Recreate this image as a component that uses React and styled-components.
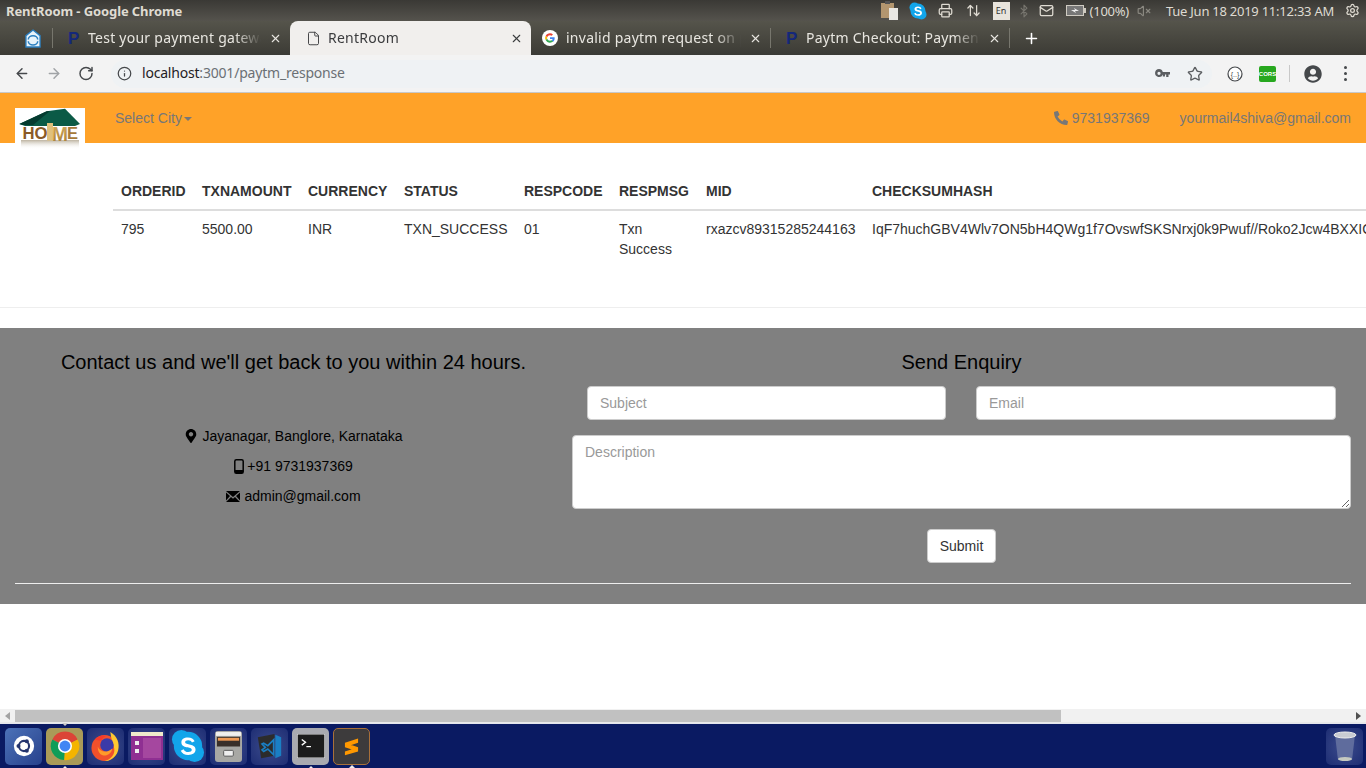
import React from "react";
import styled, { createGlobalStyle } from "styled-components";
import { ArrowLeft, ArrowRight, RotateCw, Info, Star, X, Plus, Printer, ArrowUpDown, Bluetooth, Mail, VolumeX, Settings, File } from "lucide-react";
import { FaMapMarkerAlt, FaPhoneAlt, FaUserCircle } from "react-icons/fa";

const Global = createGlobalStyle`
  html, body { margin: 0; padding: 0; height: 100%; overflow: hidden; background: #fff; }
  * { box-sizing: border-box; }
  body { font-family: "Liberation Sans", Arial, sans-serif; font-size: 14px; color: #333; }
`;

const Screen = styled.div`
  width: 1366px; height: 768px; display: flex; flex-direction: column; overflow: hidden;
`;
const TitleBar = styled.div`
  height: 21px; flex: none; display: flex; align-items: center; justify-content: space-between;
  padding: 0 6px; background: linear-gradient(#3a3935, #55534d);
  color: #dfdbd2; font: bold 13px "Noto Sans", sans-serif;
`;
const WindowTitle = styled.span`letter-spacing: -0.1px;`;
const Tray = styled.div`
  display: flex; align-items: center; height: 21px; color: #dfdbd2;
  font: 13px "Noto Sans", sans-serif; letter-spacing: -0.25px;
`;
const TrayItem = styled.span`
  display: flex; align-items: center; justify-content: center;
  margin-left: ${(p) => p.$gap ?? 0}px; white-space: nowrap;
  color: ${(p) => p.$color || "inherit"};
`;
const KeyBadge = styled.span`
  width: 17px; height: 18px; background: #e8e4dc; color: #333; font-size: 9px; letter-spacing: 0;
  display: flex; align-items: center; justify-content: center;
`;
const TabStrip = styled.div`
  height: 34px; flex: none; display: flex; align-items: stretch;
  background: linear-gradient(#55544b, #3c3b35); padding-left: 18px; color: #e8e6e0;
`;
const PinnedTab = styled.div`
  width: 34px; display: flex; align-items: center; padding-left: 7px; flex: none;
`;
const Sep = styled.span`
  width: 1px; height: 20px; background: #77766d; align-self: center; flex: none;
`;
const Tab = styled.div`
  width: ${(p) => p.$w}px; flex: none; display: flex; align-items: center; padding: 0 8px 0 ${(p) => p.$pl ?? 15}px;
  gap: ${(p) => p.$gap ?? 8}px; font: 14px "Noto Sans", sans-serif; letter-spacing: 0.25px;
  border-radius: 8px 8px 0 0;
  background: ${(p) => (p.$active ? "#f1efed" : "transparent")};
  color: ${(p) => (p.$active ? "#3b3c3e" : "#e8e6e0")};
`;
const TabLabel = styled.span`
  flex: 1; overflow: hidden; white-space: nowrap; min-width: 0; padding-bottom: 2px;
  -webkit-mask-image: linear-gradient(90deg, #000 85%, transparent 100%);
  mask-image: linear-gradient(90deg, #000 85%, transparent 100%);
`;
const PaytmGlyph = styled.span`
  width: 12px; flex: none; color: #14277a; font: bold 17px "Liberation Sans", sans-serif; line-height: 1;
`;
const NewTab = styled.div`
  margin-left: 13px; display: flex; align-items: center; color: #fff;
`;
const Toolbar = styled.div`
  height: 38px; flex: none; display: flex; align-items: center; background: #f3f3f3;
  border-bottom: 1px solid #c8c8c8; padding: 0 0 0 14px; color: #45484b;
`;
const NavButton = styled.span`
  width: 16px; display: flex; justify-content: center; margin-right: ${(p) => p.$mr ?? 16}px;
  color: ${(p) => p.$color || "#45484b"};
`;
const Omnibox = styled.div`
  width: 1101px; height: 28px; margin-left: 17px; background: #eff2f4; border-radius: 14px;
  display: flex; align-items: center; padding: 0 9px 0 6px; margin-right: 3px;
`;
const Url = styled.div`
  flex: 1; margin-left: 10px; padding-bottom: 2px; font: 14px "Noto Sans", sans-serif; color: #6b7075; white-space: nowrap; letter-spacing: -0.2px;
`;
const UrlHost = styled.span`color: #1f2124;`;
const OmniIcons = styled.div`display: flex; align-items: center; gap: 17px; color: #5b5e61;`;
const ExtRow = styled.div`display: flex; align-items: center; color: #45484b;`;
const ToolDivider = styled.span`width: 1px; height: 17px; background: #c8c8c8; margin: 0 14px 0 13px;`;
const Cors = styled.span`
  width: 17px; height: 16px; background: #27a81f; border-radius: 2px; color: #fff;
  font: bold 6px "Liberation Sans", sans-serif; display: flex; align-items: center; justify-content: center;
  margin-left: 16px;
`;
const Kebab = styled.span`
  display: flex; flex-direction: column; gap: 3px; margin-left: 22px;
`;
const Dot = styled.i`width: 3px; height: 3px; background: #45484b; border-radius: 50%; display: block;`;

const Viewport = styled.div`flex: 1; min-height: 0; overflow: hidden; background: #fff;`;
const Navbar = styled.nav`
  height: 50px; background: #ffa228; display: flex; align-items: flex-start; position: relative;
  padding-left: 15px; color: #777;
`;
const Logo = styled.div`
  width: 70px; height: 45px; margin-top: 15px; flex: none;
`;
const NavLink = styled.a`
  display: flex; align-items: center; gap: ${(p) => p.$gap ?? 0}px; line-height: 20px; margin-top: 15px; color: #777;
  margin-left: ${(p) => p.$ml ?? 0}px;
`;
const Caret = styled.span`
  display: inline-block; margin-left: 2px; margin-top: 1px; border-top: 4px solid #777;
  border-left: 4px solid transparent; border-right: 4px solid transparent;
`;
const NavRight = styled.div`margin-left: auto; display: flex; padding-right: 15px;`;
const TableWrap = styled.div`padding: 30px 0 0 113px; height: 165px; overflow: hidden; border-bottom: 1px solid #eee;`;
const DataTable = styled.table`
  border-collapse: collapse; table-layout: fixed; width: 1253px; line-height: 20px; color: #333;
`;
const Th = styled.th`
  text-align: left; padding: 8px; border-bottom: 2px solid #ddd; font-weight: 700; white-space: nowrap;
`;
const Td = styled.td`
  padding: 8px; vertical-align: top;
  white-space: ${(p) => (p.$nowrap ? "nowrap" : "normal")};
`;
const Footer = styled.footer`
  margin-top: 20px; background: #808080; height: 276px; padding: 0 15px; color: #000;
`;
const FooterGrid = styled.div`display: grid; grid-template-columns: 557px 779px; height: 255px;`;
const FooterCol = styled.div`display: flex; flex-direction: column; align-items: center; padding-top: 22px;`;
const Heading = styled.h4`margin: 0; font-size: 20px; font-weight: 400; line-height: 24px; color: #000;`;
const ContactList = styled.div`
  margin-top: 52px; display: flex; flex-direction: column; gap: 10px; align-items: center; line-height: 20px;
`;
const ContactItem = styled.div`display: flex; align-items: center; gap: ${(p) => p.$gap ?? 5}px;`;
const FieldRow = styled.div`
  display: grid; grid-template-columns: 359px 360px; column-gap: 30px; width: 100%; padding: 0 15px; margin-top: 12px;
`;
const Input = styled.input`
  height: 34px; width: 100%; border: 1px solid #ccc; border-radius: 4px; padding: 6px 12px; background: #fff;
  font: 14px "Liberation Sans", sans-serif; color: #555;
  &::placeholder { color: #999; opacity: 1; }
`;
const TextArea = styled.textarea`
  display: block; width: 100%; height: 74px; margin-top: 15px; border: 1px solid #ccc; border-radius: 4px;
  padding: 6px 12px; background: #fff; font: 14px/20px "Liberation Sans", sans-serif; color: #555;
  &::placeholder { color: #999; opacity: 1; }
`;
const SubmitButton = styled.button`
  margin-top: 20px; height: 34px; width: 69px; padding: 0; background: #fff; border: 1px solid #ccc; border-radius: 4px;
  font: 14px "Liberation Sans", sans-serif; color: #333;
`;
const FooterRule = styled.hr`margin: 0; border: 0; border-top: 1px solid #eee;`;

const ScrollBar = styled.div`
  height: 14px; flex: none; background: #f1f1f1; display: flex; align-items: center; border-bottom: 1px solid #e9e9e9;
`;
const ScrollArrow = styled.span`
  width: 15px; flex: none; display: flex; justify-content: center;
  &::before {
    content: ""; border-top: 4px solid transparent; border-bottom: 4px solid transparent;
    ${(p) => (p.$right ? "border-left: 5px solid #505050;" : "border-right: 5px solid #a3a3a3;")}
  }
`;
const ScrollThumb = styled.div`width: 1046px; height: 12px; background: #c1c1c1;`;
const ScrollGap = styled.div`flex: 1;`;
const Launcher = styled.div`
  height: 45px; flex: none; background: #0a1a62; display: flex; align-items: center; padding: 0 0 0 5px; gap: 4px;
  border-top: 1px solid #e4e6ee;
`;
const DockTile = styled.div`
  position: relative; width: 37px; height: 37px; flex: none; border-radius: 5px;
  display: flex; align-items: center; justify-content: center;
  background: ${(p) => p.$bg || "radial-gradient(circle, rgba(130,145,200,.42), rgba(80,95,160,.28))"};
  ${(p) => p.$outline && `border: 1px solid ${p.$outline};`}
`;
const Pip = styled.span`
  position: absolute; left: 50%; margin-left: -3px; border-left: 3px solid transparent; border-right: 3px solid transparent;
  ${(p) => (p.$top ? "top: -5px; border-top: 3px solid #ccc;" : "bottom: -4px; border-bottom: 3px solid #eee;")}
`;
const Trash = styled(DockTile)`margin-left: auto; margin-right: 3px;`;

const GoogleG = () => (
  <svg width="16" height="16" viewBox="0 0 48 48" style={{ flex: "none" }}>
    <circle cx="24" cy="24" r="24" fill="#fff" />
    <path fill="#EA4335" d="M24 10c3.500 0 6.500 1.200 8.900 3.400l-4 4C27.500 16 25.800 15.500 24 15.500c-3.900 0-7.200 2.600-8.400 6.100l-4.700-3.600C13.300 13.200 18.300 10 24 10z" />
    <path fill="#4285F4" d="M38 24.500c0-1-.1-2-.3-3H24v5.300h7.900c-.4 1.900-1.400 3.400-3 4.500l4.600 3.600C36.300 32.300 38 28.700 38 24.500z" />
    <path fill="#FBBC05" d="M15.600 26.500c-.6-1.700-.6-3.200 0-4.900l-4.700-3.600c-2 3.900-2 8.200 0 12.100z" />
    <path fill="#34A853" d="M24 38c3.800 0 7-1.200 9.500-3.500l-4.600-3.600c-1.300.9-3 1.400-4.900 1.400-3.900 0-7.200-2.600-8.400-6l-4.700 3.700C13.300 34.800 18.300 38 24 38z" />
  </svg>
);
const HomeGlyph = () => (
  <svg width="16" height="19" viewBox="0 0 17 20">
    <path d="M8.500 1 16 7v12H1V7z" fill="#e8f3fb" stroke="#2b7fc0" strokeWidth="1.400" />
    <path d="M3.500 11a5 4 0 0 1 10 0M13.500 13a5 4 0 0 1-10 0" fill="none" stroke="#2b7fc0" strokeWidth="1.600" />
  </svg>
);
const KeyGlyph = () => (
  <svg width="15" height="9" viewBox="0 0 15 9">
    <path fillRule="evenodd" d="M4 0a4 4 0 0 1 3.800 3H15v2.500h-1.500V8h-2.300V5.500H10V7.500H7.800V5.500A4 4 0 1 1 4 0zm0 2.700a1.600 1.600 0 1 0 0 3.200 1.600 1.600 0 0 0 0-3.200z" fill="#5b5e61" />
  </svg>
);
const Clipboard = () => (
  <svg width="18" height="20" viewBox="0 0 18 20"><rect x="0" y="2" width="13" height="15" fill="#b3966f" /><rect x="4" y="0" width="5" height="3" fill="#555" /><rect x="8" y="7" width="9" height="12" fill="#e9e7e2" /></svg>
);
const SkypeIcon = ({ size = 18 }) => (
  <svg width={size} height={size} viewBox="0 0 36 36">
    <circle cx="11" cy="11" r="10" fill="#12a5ea" /><circle cx="25" cy="25" r="10" fill="#12a5ea" /><circle cx="18" cy="18" r="15" fill="#12a5ea" />
    <path d="M25 13c-1-2.500-3.500-4-7-4-4.500 0-7 2-7 5.200 0 6.800 11 3.800 11 7.800 0 1.500-1.500 2.400-3.800 2.400-2.500 0-3.900-1-4.900-3l-3 1.600c1.400 3 4.200 4.500 8 4.500 4.700 0 7.700-2.200 7.700-5.700 0-7-11-4.300-11-7.800 0-1.200 1.300-2 3.200-2 2 0 3.200.8 4 2.400z" fill="#fff" />
  </svg>
);
const Battery = () => (
  <svg width="20" height="11" viewBox="0 0 20 11"><rect x=".5" y=".5" width="17" height="10" fill="#777" stroke="#cfcbc2" /><rect x="18" y="3" width="2" height="5" fill="#cfcbc2" /><path d="M5 5h4l-1-2 5 3H9l1 2z" fill="#eee" /></svg>
);
const DevIcon = () => (
  <svg width="16" height="16" viewBox="0 0 16 16" style={{ marginLeft: 12 }}><circle cx="8" cy="8" r="7" fill="#fff" stroke="#45484b" strokeWidth="1.200" /><text x="8" y="10.500" fontSize="7" fontFamily="Liberation Sans" textAnchor="middle" fill="#45484b">{"{..}"}</text></svg>
);
const EnvelopeGlyph = () => (
  <svg width="14" height="11" viewBox="0 0 14 11"><path d="M0 0h14L7 6z M0 1.500 4 5 0 9.500z M14 1.500 10 5l4 4.500z M0 11l5-5 2 1.800L9 6l5 5z" fill="#000" /></svg>
);
const MobileGlyph = () => (
  <svg width="10" height="15" viewBox="0 0 10 15"><rect x=".8" y=".8" width="8.400" height="13.400" rx="1.500" fill="none" stroke="#000" strokeWidth="1.500" /><rect x="1" y="11" width="8" height="3" fill="#000" /></svg>
);
const HomeLogo = () => (
  <svg width="70" height="52" viewBox="0 0 70 52" style={{ display: "block", position: "relative" }}>
    <defs>
      <linearGradient id="shade" x1="0" x2="0" y1="0" y2="1"><stop offset="0" stopColor="#bdb3a0" /><stop offset="1" stopColor="#fff" stopOpacity="0" /></linearGradient>
      <linearGradient id="gold" x1="0" x2="0" y1="0" y2="1"><stop offset="0" stopColor="#d8b165" /><stop offset="1" stopColor="#a87c34" /></linearGradient>
    </defs>
    <rect width="70" height="52" fill="#fff" />
    <rect x="6" y="32" width="58" height="9" fill="url(#shade)" />
    <path d="M4.300 16 31.700 3.300 50 .7 65 16 60 18H10z" fill="#0b5a46" />
    <path d="M4.300 16 31.700 3.300 35 3 18 17H8z" fill="#053b2f" />
    <text x="7.500" y="31" fontFamily="Liberation Sans" fontWeight="700" fontSize="17" textLength="25" lengthAdjust="spacingAndGlyphs" fill="#8a5a26">HO</text>
    <path d="M32 15h6v17.500h-6z" fill="#e0c07c" />
    <text x="37" y="32.500" fontFamily="Liberation Sans" fontWeight="700" fontSize="21" textLength="16" lengthAdjust="spacingAndGlyphs" fill="url(#gold)">M</text>
    <text x="52" y="31" fontFamily="Liberation Sans" fontWeight="700" fontSize="17" textLength="11" lengthAdjust="spacingAndGlyphs" fill="#a5793a">E</text>
  </svg>
);
const UbuntuIcon = () => (
  <svg width="22" height="22" viewBox="0 0 26 26"><circle cx="13" cy="13" r="12" fill="#fff" /><circle cx="13" cy="13" r="6" fill="none" stroke="#25356f" strokeWidth="2.500" /><circle cx="6.500" cy="13" r="2.400" fill="#25356f" /><circle cx="16.300" cy="7.300" r="2.400" fill="#25356f" /><circle cx="16.300" cy="18.700" r="2.400" fill="#25356f" /></svg>
);
const ChromeIcon = () => (
  <svg width="30" height="30" viewBox="0 0 32 32">
    <path d="M16 16 2.500 9A15 15 0 0 1 29.500 9z" fill="#db4437" /><path d="M16 16 29.500 9A15 15 0 0 1 15 31z" fill="#f4b400" /><path d="M16 16 15 31A15 15 0 0 1 2.500 9z" fill="#0f9d58" />
    <circle cx="16" cy="16" r="7.500" fill="#fff" /><circle cx="16" cy="16" r="5.800" fill="#4285f4" />
  </svg>
);
const FirefoxIcon = () => (
  <svg width="31" height="31" viewBox="0 0 32 32">
    <circle cx="15" cy="17.500" r="13.500" fill="#f0502c" />
    <path d="M21 1c7 4 10 12 8 19-2 7-8 11-14 11 7-2 11-7 10-13-.5-4-3-8-4-17z" fill="#ffc830" />
    <circle cx="17.500" cy="14.500" r="7" fill="#3b3aa8" />
    <path d="M8 16c2 6 10 7 15 2-1 6-6 8-10 7-3-1-5-4-5-9z" fill="#ff9a2a" />
    <path d="M5 9c3-4 8-5 12-4-3 1-4 3-6 5z" fill="#f6382a" />
  </svg>
);
const PurpleApp = () => (
  <svg width="32" height="28" viewBox="0 0 32 28"><rect width="32" height="28" fill="#8f2f92" /><rect width="32" height="4" fill="#efeacb" /><rect x="4" y="9" width="4" height="4" fill="#eee" /><rect x="4" y="17" width="4" height="4" fill="#eee" /><rect x="12" y="6" width="18" height="20" fill="#a5479f" /></svg>
);
const Cabinet = () => (
  <svg width="27" height="33" viewBox="0 0 28 32"><rect width="28" height="32" rx="3" fill="#a8a8a4" /><rect x="1" y="1" width="26" height="4" fill="#f0f0ee" /><rect x="2" y="6" width="24" height="10" fill="#39302a" /><rect x="3" y="7" width="22" height="3" fill="#ee9a55" /><rect x="9" y="20" width="10" height="6" rx="1" fill="#eee" stroke="#555" /></svg>
);
const VsCode = () => (
  <svg width="25" height="29" viewBox="0 0 30 32"><path d="M1 5 21 1v26L5 30z" fill="#2c2c2c" /><path d="M22 2l7 3v22l-7 3z" fill="#1a7fc4" /><path d="M6 20l4-3-4-4 2-1 5 3 7-7v18l-7-7-5 3z" fill="none" stroke="#1a7fc4" strokeWidth="2" /></svg>
);
const TerminalIcon = () => (
  <svg width="28" height="24" viewBox="0 0 30 26"><rect width="30" height="26" fill="#1c1c1c" stroke="#eee" /><path d="M5 6l4 3-4 3" fill="none" stroke="#fff" strokeWidth="1.500" /><rect x="10" y="13" width="5" height="1.300" fill="#fff" /></svg>
);
const SublimeIcon = () => (
  <svg width="17" height="19" viewBox="0 0 20 26"><path d="M19 2v6L1 14V8z M1 8l18 6v6L1 14z M19 14v6L1 25v-5z" fill="#ff9800" /></svg>
);
const TrashIcon = () => (
  <svg width="26" height="32" viewBox="0 0 26 32"><path d="M3 5 6 30h14l3-25z" fill="#5f6c9d" /><ellipse cx="13" cy="5" rx="11" ry="3" fill="#c8cbd2" stroke="#eee" /><ellipse cx="13" cy="29" rx="7" ry="2" fill="#c5c9c0" /></svg>
);

const cols = [81, 106, 96, 120, 95, 87, 166, 502];
const heads = ["ORDERID", "TXNAMOUNT", "CURRENCY", "STATUS", "RESPCODE", "RESPMSG", "MID", "CHECKSUMHASH"];
const values = ["795", "5500.00", "INR", "TXN_SUCCESS", "01", "Txn Success", "rxazcv89315285244163", "IqF7huchGBV4Wlv7ON5bH4QWg1f7OvswfSKSNrxj0k9Pwuf//Roko2Jcw4BXXIG"];

export default function App() {
  return (
    <Screen>
      <Global />
      <TitleBar>
        <WindowTitle>RentRoom - Google Chrome</WindowTitle>
        <Tray>
          <TrayItem><Clipboard /></TrayItem>
          <TrayItem $gap={10}><SkypeIcon /></TrayItem>
          <TrayItem $gap={11}><Printer size={15} /></TrayItem>
          <TrayItem $gap={13}><ArrowUpDown size={15} /></TrayItem>
          <TrayItem $gap={12}><KeyBadge>En</KeyBadge></TrayItem>
          <TrayItem $gap={7} $color="#77756e"><Bluetooth size={14} /></TrayItem>
          <TrayItem $gap={8}><Mail size={15} /></TrayItem>
          <TrayItem $gap={12}><Battery /></TrayItem>
          <TrayItem $gap={4}>(100%)</TrayItem>
          <TrayItem $gap={8} $color="#8a8880"><VolumeX size={14} /></TrayItem>
          <TrayItem $gap={15}>Tue Jun 18 2019 11:12:33 AM</TrayItem>
          <TrayItem $gap={11}><Settings size={15} /></TrayItem>
        </Tray>
      </TitleBar>
      <TabStrip>
        <PinnedTab><HomeGlyph /></PinnedTab>
        <Sep />
        <Tab $w={237}><PaytmGlyph>P</PaytmGlyph><TabLabel>Test your payment gateway</TabLabel><X size={13} /></Tab>
        <Tab $w={241} $active $pl={16} $gap={7}><File size={15} strokeWidth={1.5} /><TabLabel>RentRoom</TabLabel><X size={13} /></Tab>
        <Tab $w={239} $pl={11}><GoogleG /><TabLabel>invalid paytm request on paytm</TabLabel><X size={13} /></Tab>
        <Sep />
        <Tab $w={238}><PaytmGlyph>P</PaytmGlyph><TabLabel>Paytm Checkout: Payment</TabLabel><X size={13} /></Tab>
        <Sep />
        <NewTab><Plus size={17} strokeWidth={2.2} /></NewTab>
      </TabStrip>
      <Toolbar>
        <NavButton><ArrowLeft size={19} strokeWidth={2.2} /></NavButton>
        <NavButton $color="#a0a3a6"><ArrowRight size={19} strokeWidth={2.2} /></NavButton>
        <NavButton $mr={0}><RotateCw size={17} strokeWidth={2.2} /></NavButton>
        <Omnibox>
          <Info size={15} />
          <Url><UrlHost>localhost</UrlHost>:3001/paytm_response</Url>
          <OmniIcons><KeyGlyph /><Star size={16} /></OmniIcons>
        </Omnibox>
        <ExtRow>
          <DevIcon />
          <Cors>CORS</Cors>
          <ToolDivider />
          <FaUserCircle size={18} />
          <Kebab><Dot /><Dot /><Dot /></Kebab>
        </ExtRow>
      </Toolbar>
      <Viewport>
        <Navbar>
          <Logo><HomeLogo /></Logo>
          <NavLink $ml={30}>Select City<Caret /></NavLink>
          <NavRight>
            <NavLink $gap={4}><FaPhoneAlt size={14} />9731937369</NavLink>
            <NavLink $ml={30}>yourmail4shiva@gmail.com</NavLink>
          </NavRight>
        </Navbar>
        <TableWrap>
          <DataTable>
            <colgroup>{cols.map((w, i) => <col key={i} style={{ width: w }} />)}</colgroup>
            <thead><tr>{heads.map((h) => <Th key={h}>{h}</Th>)}</tr></thead>
            <tbody><tr>{values.map((v, i) => <Td key={i} $nowrap={i !== 5}>{v}</Td>)}</tr></tbody>
          </DataTable>
        </TableWrap>
        <Footer>
          <FooterGrid>
            <FooterCol>
              <Heading>Contact us and we'll get back to you within 24 hours.</Heading>
              <ContactList>
                <ContactItem $gap={4}><FaMapMarkerAlt size={14} />Jayanagar, Banglore, Karnataka</ContactItem>
                <ContactItem $gap={3}><MobileGlyph />+91 9731937369</ContactItem>
                <ContactItem $gap={4}><EnvelopeGlyph />admin@gmail.com</ContactItem>
              </ContactList>
            </FooterCol>
            <FooterCol>
              <Heading>Send Enquiry</Heading>
              <FieldRow>
                <Input placeholder="Subject" />
                <Input placeholder="Email" />
              </FieldRow>
              <TextArea placeholder="Description" />
              <SubmitButton>Submit</SubmitButton>
            </FooterCol>
          </FooterGrid>
          <FooterRule />
        </Footer>
      </Viewport>
      <ScrollBar>
        <ScrollArrow />
        <ScrollThumb />
        <ScrollGap />
        <ScrollArrow $right />
      </ScrollBar>
      <Launcher>
        <DockTile $bg="linear-gradient(135deg,#4c72b8,#27418c)"><UbuntuIcon /></DockTile>
        <DockTile $bg="#a99a58"><ChromeIcon /><Pip $top /><Pip /></DockTile>
        <DockTile><FirefoxIcon /></DockTile>
        <DockTile><PurpleApp /></DockTile>
        <DockTile><SkypeIcon size={34} /></DockTile>
        <DockTile><Cabinet /></DockTile>
        <DockTile><VsCode /></DockTile>
        <DockTile $bg="#a9aab0"><TerminalIcon /><Pip /></DockTile>
        <DockTile $bg="#3d3b3c" $outline="#a8703a"><SublimeIcon /><Pip /></DockTile>
        <Trash><TrashIcon /></Trash>
      </Launcher>
    </Screen>
  );
}
